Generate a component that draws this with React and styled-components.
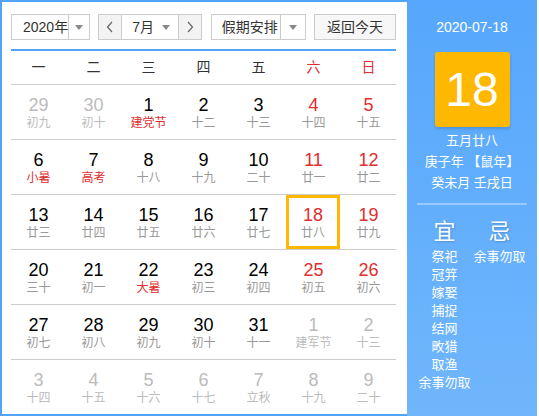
import React from 'react';
import styled, { createGlobalStyle } from 'styled-components';

const GlobalStyle = createGlobalStyle`
  body {
    margin: 0;
    background: #fff;
    font-family: 'Liberation Sans', 'Noto Sans CJK SC', sans-serif;
  }
`;

const weekdays = ['一', '二', '三', '四', '五', '六', '日'];

// [day, lunar, flags]  o = other month, f = festival / solar term
const weeks = [
  [[29, '初九', 'o'], [30, '初十', 'o'], [1, '建党节', 'f'], [2, '十二'], [3, '十三'], [4, '十四'], [5, '十五']],
  [[6, '小暑', 'f'], [7, '高考', 'f'], [8, '十八'], [9, '十九'], [10, '二十'], [11, '廿一'], [12, '廿二']],
  [[13, '廿三'], [14, '廿四'], [15, '廿五'], [16, '廿六'], [17, '廿七'], [18, '廿八', 't'], [19, '廿九']],
  [[20, '三十'], [21, '初一'], [22, '大暑', 'f'], [23, '初三'], [24, '初四'], [25, '初五'], [26, '初六']],
  [[27, '初七'], [28, '初八'], [29, '初九'], [30, '初十'], [31, '十一'], [1, '建军节', 'o'], [2, '十三', 'o']],
  [[3, '十四', 'o'], [4, '十五', 'o'], [5, '十六', 'o'], [6, '十七', 'o'], [7, '立秋', 'o'], [8, '十九', 'o'], [9, '二十', 'o']],
];

const yi = ['祭祀', '冠笄', '嫁娶', '捕捉', '结网', '畋猎', '取渔', '余事勿取'];
const ji = ['余事勿取'];

function Chevron({ left }) {
  return (
    <svg width="8" height="12" viewBox="0 0 8 12">
      <polyline
        points={left ? '6,1 1.5,6 6,11' : '2,1 6.5,6 2,11'}
        fill="none"
        stroke="#666"
        strokeWidth="1.2"
      />
    </svg>
  );
}

export default function App() {
  return (
    <>
      <GlobalStyle />
      <Frame>
        <Main>
          <Toolbar>
            <Select width={79}>
              <SelectText pad={11}>2020年</SelectText>
              <ArrowCell />
            </Select>
            <MonthGroup>
              <NavButton><Chevron left /></NavButton>
              <MonthSelect>
                <SelectText pad={10}>7月</SelectText>
                <Caret />
              </MonthSelect>
              <NavButton><Chevron /></NavButton>
            </MonthGroup>
            <Select width={95}>
              <SelectText pad={10}>假期安排</SelectText>
              <ArrowCell />
            </Select>
            <TodayButton>返回今天</TodayButton>
          </Toolbar>

          <WeekHeader>
            {weekdays.map((w, i) => (
              <WeekName key={w} weekend={i >= 5}>{w}</WeekName>
            ))}
          </WeekHeader>

          {weeks.map((week, r) => (
            <WeekRow key={r} last={r === weeks.length - 1}>
              {week.map(([day, lunar, flag], i) => (
                <DayCell key={i} today={flag === 't'}>
                  <DayNum other={flag === 'o'} weekend={i >= 5}>{day}</DayNum>
                  <Lunar other={flag === 'o'} festival={flag === 'f'}>{lunar}</Lunar>
                </DayCell>
              ))}
            </WeekRow>
          ))}
        </Main>

        <Side>
          <SideDate>2020-07-18</SideDate>
          <BigDay>18</BigDay>
          <SideInfo>
            <div>五月廿八</div>
            <div>庚子年 【鼠年】</div>
            <div>癸未月 壬戌日</div>
          </SideInfo>
          <Divider />
          <Almanac>
            <AlmanacCol>
              <AlmanacTitle>宜</AlmanacTitle>
              {yi.map((t) => <AlmanacItem key={t}>{t}</AlmanacItem>)}
            </AlmanacCol>
            <AlmanacCol>
              <AlmanacTitle>忌</AlmanacTitle>
              {ji.map((t) => <AlmanacItem key={t}>{t}</AlmanacItem>)}
            </AlmanacCol>
          </Almanac>
        </Side>
      </Frame>
    </>
  );
}

const Frame = styled.div`
  display: flex;
  width: 537px;
  height: 416px;
  box-sizing: border-box;
  border: 2px solid #52a4fb;
  border-right: none;
  background: #fff;
`;

const Main = styled.div`
  width: 385px;
  padding: 12px 11px 0 9px;
`;

const Toolbar = styled.div`
  display: flex;
  justify-content: space-between;
  height: 26px;
`;

const Select = styled.div`
  display: flex;
  width: ${(p) => p.width}px;
  height: 26px;
  box-sizing: border-box;
  border: 1px solid #ccc;
  background: #fff;
`;

const SelectText = styled.div`
  flex: 1;
  padding-left: ${(p) => p.pad}px;
  font-size: 14px;
  line-height: 24px;
  color: #333;
  white-space: nowrap;
`;

const Caret = styled.span`
  align-self: center;
  width: 0;
  height: 0;
  margin-right: 8px;
  border-left: 4px solid transparent;
  border-right: 4px solid transparent;
  border-top: 5px solid #888;
`;

const ArrowCell = styled.div`
  display: flex;
  align-items: center;
  justify-content: center;
  width: 24px;
  border-left: 1px solid #ccc;

  &::after {
    content: '';
    border-left: 4px solid transparent;
    border-right: 4px solid transparent;
    border-top: 5px solid #888;
  }
`;

const MonthGroup = styled.div`
  display: flex;
  width: 104px;
  height: 26px;
  box-sizing: border-box;
  border: 1px solid #ccc;
`;

const NavButton = styled.div`
  display: flex;
  align-items: center;
  justify-content: center;
  width: 22px;
  background: #f3f3f3;
`;

const MonthSelect = styled.div`
  display: flex;
  flex: 1;
  background: #fff;
  border-left: 1px solid #ccc;
  border-right: 1px solid #ccc;
`;

const TodayButton = styled.div`
  width: 82px;
  height: 26px;
  box-sizing: border-box;
  border: 1px solid #ccc;
  background: #f7f7f7;
  text-align: center;
  font-size: 14px;
  line-height: 24px;
  color: #333;
`;

const WeekHeader = styled.div`
  display: grid;
  grid-template-columns: repeat(7, 55px);
  margin-top: 9px;
  height: 33px;
  border-top: 2px solid #52a4fb;
  border-bottom: 1px solid #ccc;
`;

const WeekName = styled.div`
  text-align: center;
  font-size: 14px;
  line-height: 33px;
  color: ${(p) => (p.weekend ? '#e02d2d' : '#333')};
`;

const WeekRow = styled.div`
  display: grid;
  grid-template-columns: repeat(7, 55px);
  height: 54px;
  border-bottom: ${(p) => (p.last ? 'none' : '1px solid #ccc')};
`;

const DayCell = styled.div`
  box-sizing: border-box;
  height: 54px;
  width: ${(p) => (p.today ? '54px' : '55px')};
  padding-top: ${(p) => (p.today ? '7px' : '10px')};
  border: ${(p) => (p.today ? '3px solid #ffb800' : 'none')};
  text-align: center;
`;

const DayNum = styled.div`
  font-size: 18px;
  line-height: 20px;
  color: ${(p) => (p.other ? '#bbb' : p.weekend ? '#e02d2d' : '#000')};
`;

const Lunar = styled.div`
  font-size: 12px;
  line-height: 16px;
  color: ${(p) => (p.other ? '#bbb' : p.festival ? '#e02d2d' : '#999')};
  white-space: nowrap;
`;

const Side = styled.div`
  display: flex;
  flex-direction: column;
  align-items: center;
  width: 130px;
  margin-top: -2px;
  margin-bottom: -2px;
  padding-top: 17px;
  background: linear-gradient(#56a7fd, #70b6fc);
  color: #fff;
`;

const SideDate = styled.div`
  font-size: 14px;
  line-height: 20px;
`;

const BigDay = styled.div`
  width: 75px;
  height: 75px;
  margin-top: 15px;
  border-radius: 3px;
  background: #ffb800;
  box-shadow: 0 2px 3px rgba(0, 0, 0, 0.15);
  text-align: center;
  font-size: 48px;
  line-height: 75px;
  color: #fff;
`;

const SideInfo = styled.div`
  margin-top: 3px;
  text-align: center;
  font-size: 13px;
  line-height: 21px;
  white-space: nowrap;
`;

const Divider = styled.div`
  align-self: stretch;
  height: 2px;
  margin: 10px 10px 0;
  background: rgba(255, 255, 255, 0.35);
`;

const Almanac = styled.div`
  display: grid;
  grid-template-columns: 55px 55px;
  padding-top: 13px;
`;

const AlmanacCol = styled.div`
  display: flex;
  flex-direction: column;
  align-items: center;
`;

const AlmanacTitle = styled.div`
  font-size: 22px;
  line-height: 28px;
  margin-bottom: 2px;
  text-shadow: 1px 1px 2px rgba(0, 0, 0, 0.2);
`;

const AlmanacItem = styled.div`
  font-size: 13px;
  line-height: 18px;
  white-space: nowrap;
`;
